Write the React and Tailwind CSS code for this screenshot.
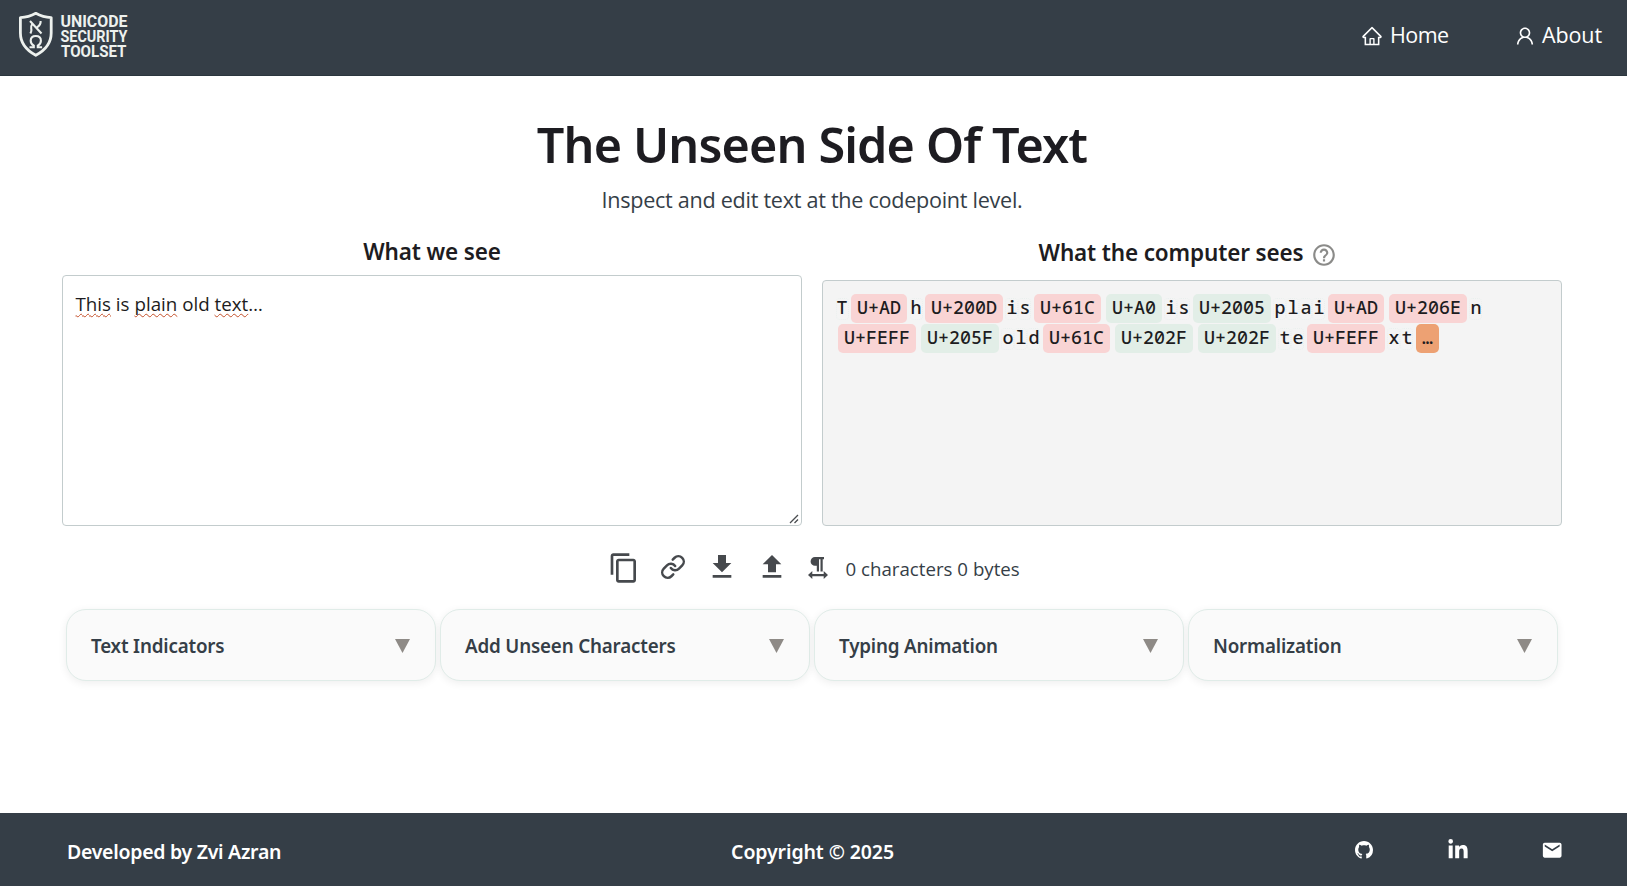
import React from "react";
import { AiOutlineHome, AiOutlineUser } from "react-icons/ai";
import { FiLink } from "react-icons/fi";
import { MdContentCopy, MdEmail, MdHelpOutline } from "react-icons/md";
import { FaLinkedinIn } from "react-icons/fa";
import { BsGithub } from "react-icons/bs";

const CHIP_COLORS = {
  red: "bg-[#f9d4d4]",
  green: "bg-[#e2eee7]",
  orange: "bg-[#eda173]",
};

const LINES = [
  ["T", ["U+AD", "red"], "h", ["U+200D", "red"], "i", "s", ["U+61C", "red"], ["U+A0", "green"], "i", "s", ["U+2005", "green"], "p", "l", "a", "i", ["U+AD", "red"], ["U+206E", "red"], "n"],
  [["U+FEFF", "red"], ["U+205F", "green"], "o", "l", "d", ["U+61C", "red"], ["U+202F", "green"], ["U+202F", "green"], "t", "e", ["U+FEFF", "red"], "x", "t", ["…", "orange"]],
];

function Codepoint({ item }) {
  if (typeof item === "string") {
    return (
      <span className="flex h-[22px] w-[13px] items-center justify-center rounded-sm border border-dotted border-[#eaf0ee]">
        <span className="-mt-1">{item}</span>
      </span>
    );
  }
  return (
    <span className={`mx-[2.5px] h-[29px] rounded-[5px] px-1.5 leading-[26px] ${CHIP_COLORS[item[1]]}`}>{item[0]}</span>
  );
}

function Logo() {
  return (
    <svg width="112" height="50" viewBox="0 0 112 50" fill="none" className="text-[#edf1ee]">
      <path d="M17.8 3.300C13 6 7.500 7.400 2.400 7.600V23c0 10.500 6.500 17.500 15.400 22.300C26.700 40.500 33.200 33.500 33.200 23V7.600C28.100 7.400 22.600 6 17.800 3.300Z" stroke="currentColor" strokeWidth="2.800" strokeLinejoin="round" />
      <g stroke="currentColor" strokeWidth="2.100">
        <path d="M12 11L23.500 23.500M22.600 11c.3 3-.6 4.500-3.600 6.300M14 14.500c-1.800 2.500-.6 4-.6 5.500 0 1.500-.5 2.500-1 3.500" />
        <path d="M11.500 37.300h4.300v-1.600c-2-1.200-3.100-3-3.100-5 0-2.900 2.100-4.700 5.100-4.700s5.100 1.800 5.100 4.700c0 2-1.100 3.800-3.100 5v1.600h4.300" />
      </g>
      <g fill="currentColor" fontWeight="700" fontFamily="Roboto" fontSize="16.500">
        <text x="42.500" y="17" textLength="67" lengthAdjust="spacingAndGlyphs">UNICODE</text>
        <text x="42.500" y="31.800" textLength="67" lengthAdjust="spacingAndGlyphs">SECURITY</text>
        <text x="43" y="46.500" textLength="65.500" lengthAdjust="spacingAndGlyphs">TOOLSET</text>
      </g>
    </svg>
  );
}

function TransferIcon({ up }) {
  return (
    <svg viewBox="0 0 24 24" className="size-8" fill="currentColor">
      <path d={up ? "M9 16h6v-6h4l-7-7-7 7h4zM5 18h14v2H5z" : "M19 9h-4V3H9v6H5l7 7 7-7zM5 18v2h14v-2H5z"} />
    </svg>
  );
}

function ParagraphIcon() {
  return (
    <svg viewBox="0 0 20 22" className="h-[22px] w-5" fill="currentColor">
      <path d="M7 0h9v2.200h-1.300V14.500h-2.200V2.200h-1.500V14.500H8.800V8.800H7A4.400 4.400 0 0 1 7 0Z" />
      <path d="M0 18l4.300-3.900V17h11.400v-2.900L20 18l-4.300 3.900V19.200H4.300v2.700Z" />
    </svg>
  );
}

function Misspelled({ children }) {
  return (
    <span className="underline decoration-[#c4502a] decoration-wavy decoration-[1.3px] underline-offset-[2px] [text-decoration-skip-ink:none]">
      {children}
    </span>
  );
}

const CARDS = ["Text Indicators", "Add Unseen Characters", "Typing Animation", "Normalization"];

export default function App() {
  return (
    <div className="flex h-[886px] flex-col bg-white font-['Noto_Sans',sans-serif] text-[#1d1c21]">
      <header className="flex h-[76px] items-start justify-between border-b border-[#2b363e] bg-[#353e47] pt-2.5 pr-[25px] pl-[18px] text-white">
        <Logo />
        <nav className="flex gap-[67px] pt-1 font-['Open_Sans',sans-serif] text-[21.5px] leading-[42px]">
          <a className="flex items-center gap-[7px]">
            <AiOutlineHome className="mt-0.5 size-[22px]" />
            <span className="tracking-[-0.6px]">Home</span>
          </a>
          <a className="-ml-[1.5px] flex items-center gap-[6px]">
            <AiOutlineUser className="mt-0.5 size-[22px]" />
            <span className="tracking-[-0.1px]">About</span>
          </a>
        </nav>
      </header>

      <main className="flex flex-1 flex-col pt-9 pr-[65px] pl-[62px]">
        <h1 className="h-16 text-center text-[48.5px] leading-[65px] font-semibold tracking-[-0.85px]">The Unseen Side Of Text</h1>
        <p className="h-12 text-center font-['Open_Sans',sans-serif] text-[21.6px] leading-[47px] tracking-[-0.28px] text-[#353e47]">
          Inspect and edit text at the codepoint level.
        </p>

        <div className="grid h-[302px] grid-cols-[740px_740px] gap-5">
          <section className="flex flex-col">
            <h2 className="h-[51px] text-center text-[22.5px] leading-[56px] font-semibold tracking-[-0.15px]">What we see</h2>
            <div className="flex flex-1 flex-col justify-between rounded border border-[#c3cccd] bg-white pt-[13px] pl-3">
              <p className="pl-[0.5px] font-['Open_Sans',sans-serif] text-[18.75px] leading-[30px]">
                <Misspelled>This</Misspelled> is <Misspelled>plain</Misspelled> old <Misspelled>text</Misspelled>…
              </p>
              <svg viewBox="0 0 10 10" className="mr-[2px] mb-[1px] size-2.5 self-end" stroke="#4a4d50" strokeWidth="1.300">
                <path d="M1 9L9 1M5.500 9L9 5.500" />
              </svg>
            </div>
          </section>
          <section className="flex flex-col">
            <h2 className="flex h-14 items-center justify-center gap-[8px] pr-2 text-[22.5px] leading-[56px] font-semibold tracking-[-0.15px]">
              <span className="pt-0.5">What the computer sees</span>
              <MdHelpOutline className="mt-1.5 size-[26px] text-[#8b8b89]" />
            </h2>
            <div className="flex flex-1 flex-col gap-px rounded border border-[#c3cccd] bg-[#f4f4f4] pt-[13px] pl-[12.5px] font-['Noto_Sans_Mono',monospace] text-[18.33px] font-medium">
              {LINES.map((line, i) => (
                <div key={i} className="flex h-[29px] items-center">
                  {line.map((item, j) => (
                    <Codepoint key={j} item={item} />
                  ))}
                </div>
              ))}
            </div>
          </section>
        </div>

        <div className="mx-auto flex h-[83px] w-[427px] items-center text-[#46494d]">
          <span className="flex w-[49.5px] justify-center pl-px"><MdContentCopy className="size-8" /></span>
          <span className="flex w-[49.5px] justify-center pb-px pl-px"><FiLink className="size-[26px]" strokeWidth="2.3" /></span>
          <span className="flex w-[49.5px] justify-center pb-px"><TransferIcon /></span>
          <span className="flex w-[49.5px] justify-center pb-px pl-px"><TransferIcon up /></span>
          <span className="flex w-[43px] justify-center"><ParagraphIcon /></span>
          <span className="ml-1.5 pt-[3px] font-['Open_Sans',sans-serif] text-[18.7px] whitespace-nowrap text-[#353e47]">0 characters 0 bytes</span>
        </div>

        <div className="mx-1 grid h-[72px] grid-cols-4 gap-1">
          {CARDS.map((title) => (
            <div key={title} className="flex items-center justify-between rounded-[20px] border border-[#e0ece8] bg-[#fafafa] pr-6 pl-6 shadow-[0_2px_8px_rgba(0,0,0,0.07)]">
              <span className="pt-[3px] text-[18.8px] font-semibold tracking-[-0.18px] text-[#353e47]">{title}</span>
              <svg viewBox="0 0 15 14" className="mt-0.5 mr-px h-3.5 w-[15px] fill-[#8e8a86]"><path d="M0 0h15L7.500 14Z" /></svg>
            </div>
          ))}
        </div>
      </main>

      <footer className="flex h-[73px] bg-[#353e47] pr-[69px] pl-[67px] text-[19.5px] leading-[77px] font-semibold tracking-[-0.28px] text-white">
        <span className="flex-1">Developed by Zvi Azran</span>
        <span className="text-center tracking-[-0.1px]">Copyright © 2025</span>
        <span className="flex h-[73px] flex-1 items-center justify-end">
          <BsGithub className="mr-[74px] size-[18px]" />
          <FaLinkedinIn className="mr-[72px] size-[22px]" />
          <MdEmail className="-mr-[5px] mt-px size-[22.4px]" />
        </span>
      </footer>
    </div>
  );
}
